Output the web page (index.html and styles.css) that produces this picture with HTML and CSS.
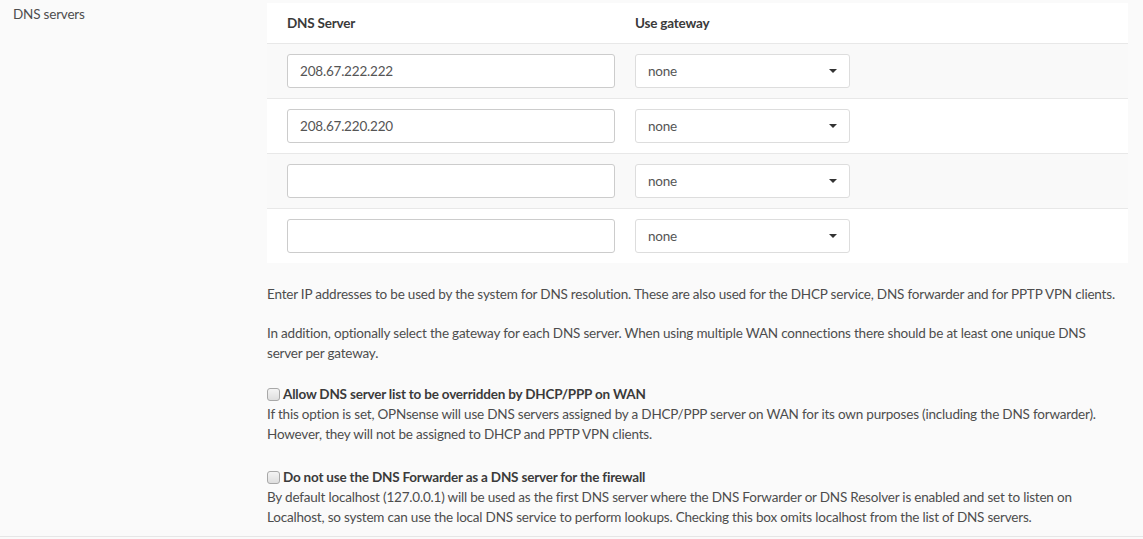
FILE: index.html
```html
<!DOCTYPE html>
<html lang="en">
<head>
  <meta charset="UTF-8">
  <meta name="viewport" content="width=device-width, initial-scale=1.0">
  <title>DNS servers</title>
  <link rel="stylesheet" href="styles.css">
</head>
<body>
  <div class="setting-row">
    <div class="setting-label">DNS servers</div>
    <div class="setting-value">
      <div class="dns-table">
        <div class="dns-head">
          <div class="cell">DNS Server</div>
          <div class="cell">Use gateway</div>
          <div class="cell"></div>
        </div>
        <div class="dns-row striped">
          <div class="cell"><input type="text" class="form-input" value="208.67.222.222"></div>
          <div class="cell"><div class="select">none<span class="caret"></span></div></div>
          <div class="cell"></div>
        </div>
        <div class="dns-row">
          <div class="cell"><input type="text" class="form-input" value="208.67.220.220"></div>
          <div class="cell"><div class="select">none<span class="caret"></span></div></div>
          <div class="cell"></div>
        </div>
        <div class="dns-row striped">
          <div class="cell"><input type="text" class="form-input" value=""></div>
          <div class="cell"><div class="select">none<span class="caret"></span></div></div>
          <div class="cell"></div>
        </div>
        <div class="dns-row last">
          <div class="cell"><input type="text" class="form-input" value=""></div>
          <div class="cell"><div class="select">none<span class="caret"></span></div></div>
          <div class="cell"></div>
        </div>
      </div>

      <p class="help first">Enter IP addresses to be used by the system for DNS resolution. These are also used for the DHCP service, DNS forwarder and for PPTP VPN clients.</p>
      <p class="help">In addition, optionally select the gateway for each DNS server. When using multiple WAN connections there should be at least one unique DNS server per gateway.</p>

      <div class="option">
        <label class="check"><input type="checkbox"> Allow DNS server list to be overridden by DHCP/PPP on WAN</label>
        <div class="help-text">If this option is set, OPNsense will use DNS servers assigned by a DHCP/PPP server on WAN for its own purposes (including the DNS forwarder). However, they will not be assigned to DHCP and PPTP VPN clients.</div>
      </div>

      <div class="option">
        <label class="check"><input type="checkbox"> Do not use the DNS Forwarder as a DNS server for the firewall</label>
        <div class="help-text">By default localhost (127.0.0.1) will be used as the first DNS server where the DNS Forwarder or DNS Resolver is enabled and set to listen on Localhost, so system can use the local DNS service to perform lookups. Checking this box omits localhost from the list of DNS servers.</div>
      </div>
    </div>
  </div>
</body>
</html>
```

FILE: styles.css
```css
body {
  margin: 0;
  background-color: #fafafa;
  font-family: Lato, "Open Sans", sans-serif;
  font-size: 13.5px;
  letter-spacing: -0.2px;
  line-height: 20px;
  color: #4d4d4d;
}

.setting-row {
  display: flex;
  border-bottom: 1px solid #e6e6e6;
  padding-bottom: 9px;
}

.setting-label {
  width: 254px;
  padding: 4px 0 0 13px;
}

.setting-value {
  flex: 1;
  padding: 3px 15px 0 0;
}

.dns-table {
  background-color: #fff;
}

.dns-head,
.dns-row {
  display: grid;
  grid-template-columns: 348px 235px 1fr;
  border-bottom: 1px solid #e8e8e8;
}

.dns-head {
  height: 40px;
  align-items: center;
  font-weight: bold;
  color: #3a3a3a;
}

.dns-row {
  padding: 10px 0;
}

.dns-row.last {
  border-bottom: none;
}

.striped {
  background-color: #f9f9f9;
}

.cell {
  padding-left: 20px;
}

.form-input {
  box-sizing: border-box;
  width: 328px;
  height: 34px;
  margin: 0;
  padding: 0 12px;
  border: 1px solid #ccc;
  border-radius: 3px;
  background: #fff;
  font-family: inherit;
  font-size: 13.5px;
  letter-spacing: -0.2px;
  color: #555;
}

.select {
  box-sizing: border-box;
  position: relative;
  width: 215px;
  height: 34px;
  padding: 0 12px;
  border: 1px solid #ddd;
  border-radius: 3px;
  background: #fff;
  line-height: 32px;
  color: #555;
}

.caret {
  position: absolute;
  right: 12px;
  top: 14px;
  width: 0;
  height: 0;
  border-left: 4px solid transparent;
  border-right: 4px solid transparent;
  border-top: 4px solid #333;
}

.help {
  margin: 0 8px 0 0;
  padding-top: 19px;
}

.help.first {
  padding-top: 21px;
}

.option {
  padding-top: 21px;
}

.option + .option {
  padding-top: 23px;
}

.check {
  display: flex;
  align-items: center;
  font-weight: bold;
  color: #3a3a3a;
}

.check input {
  appearance: none;
  box-sizing: border-box;
  width: 13px;
  height: 13px;
  margin: 0 3px 0 0;
  border: 1px solid #a8a8a8;
  border-radius: 3px;
  background: linear-gradient(#f4f4f4, #dedede);
}
```
